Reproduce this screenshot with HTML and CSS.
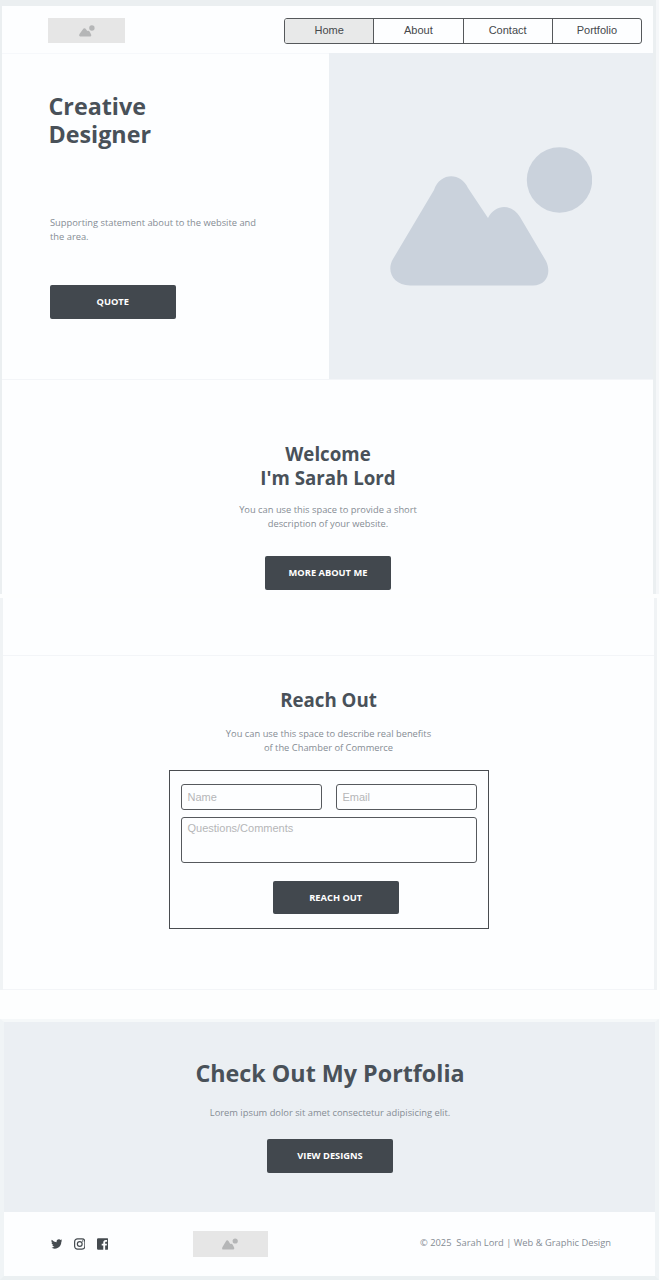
FILE: index.html
```html
<!DOCTYPE html>
<html lang="en">
<head>
<meta charset="utf-8">
<title>Sarah Lord | Web &amp; Graphic Design</title>
<link rel="stylesheet" href="styles.css">
</head>
<body>
<svg class="defs" width="0" height="0" aria-hidden="true">
  <symbol id="picture" viewBox="0 0 202 139">
    <path d="M44 43C50 25 71 25 78 41L98 71C106 56 122 57 130 70L156 114C162 127 156 138.500 143 138.500H20C3 138-4 124 3 112Z"/>
    <circle cx="169.500" cy="33" r="32.700"/>
  </symbol>
</svg>
<div class="sheet sheet-top">
  <header class="header">
    <div class="logo"><svg class="logo-icon" viewBox="0 0 16 12"><path d="M1.300 11.500C0 11.500-.2 10 .7 8.800L3.800 4.500C4.600 3 6.200 3 7 4.200L8.300 6C9.200 5.300 10.200 5.700 10.700 6.700L12 9.200C12.700 10.500 12 11.500 10.800 11.500Z"/><circle cx="12.900" cy="3" r="2.700"/></svg></div>
    <nav class="nav">
      <a class="nav-item active">Home</a><a class="nav-item">About</a><a class="nav-item">Contact</a><a class="nav-item">Portfolio</a>
    </nav>
  </header>
  <section class="hero">
    <div class="hero-copy">
      <h1 class="title">Creative<br>Designer</h1>
      <p class="text hero-text">Supporting statement about to the website and<br>the area.</p>
      <a class="button">QUOTE</a>
    </div>
    <div class="hero-image"><svg class="hero-picture"><use href="#picture"/></svg></div>
  </section>
  <section class="welcome">
    <h2 class="subtitle">Welcome<br>I'm Sarah Lord</h2>
    <p class="text welcome-text">You can use this space to provide a short<br>description of your website.</p>
    <a class="button">MORE ABOUT ME</a>
  </section>
</div>
<div class="sheet sheet-middle">
  <div class="spacer"></div>
  <section class="contact">
    <h2 class="subtitle">Reach Out</h2>
    <p class="text contact-text">You can use this space to describe real benefits<br>of the Chamber of Commerce</p>
    <form class="form">
      <div class="row">
        <div class="field">Name</div>
        <div class="field">Email</div>
      </div>
      <div class="field area">Questions/Comments</div>
      <a class="button form-button">REACH OUT</a>
    </form>
  </section>
</div>
<div class="sheet sheet-bottom">
  <section class="portfolio">
    <h2 class="title portfolio-title">Check Out My Portfolia</h2>
    <p class="text portfolio-text">Lorem ipsum dolor sit amet consectetur adipisicing elit.</p>
    <a class="button">VIEW DESIGNS</a>
  </section>
  <footer class="footer">
    <div class="social">
      <svg class="social-icon" viewBox="0 0 24 20"><path d="M24 2.400a10 10 0 0 1-2.800.8A5 5 0 0 0 23.300.5a10 10 0 0 1-3.100 1.200 4.900 4.900 0 0 0-8.400 4.500A14 14 0 0 1 1.700 1a4.900 4.900 0 0 0 1.500 6.600A5 5 0 0 1 1 7v.1a4.900 4.900 0 0 0 3.900 4.800 5 5 0 0 1-2.200.1 4.900 4.900 0 0 0 4.600 3.400A9.900 9.900 0 0 1 0 17.500a14 14 0 0 0 21.500-12.400A10 10 0 0 0 24 2.400Z"/></svg>
      <svg class="social-icon" viewBox="0 0 24 24"><g class="outline"><rect x="1.300" y="1.300" width="21.400" height="21.400" rx="6"/><circle cx="12" cy="12" r="5"/></g><circle cx="18.200" cy="5.800" r="1.500"/></svg>
      <svg class="social-icon" viewBox="0 0 24 24"><path d="M2.500 0h19A2.500 2.500 0 0 1 24 2.500v19a2.500 2.500 0 0 1-2.500 2.500H17v-9h3.300l.5-3.700H17V9c0-1.200.5-1.900 2-1.900h2V3.700C20 3.500 19 3.500 18 3.500c-3 0-4.900 1.900-4.900 5v2.800H9.800V15h3.300v9H2.500A2.500 2.500 0 0 1 0 21.500v-19A2.500 2.500 0 0 1 2.500 0Z"/></svg>
    </div>
    <div class="logo footer-logo"><svg class="logo-icon" viewBox="0 0 16 12"><path d="M1 11.500C0 11.500-.2 10 .7 8.800L3.800 3.500C4.600 2 5.800 2 6.600 3.200L8.300 6C9.200 5.300 10.200 5.700 10.700 6.700L12 9.200C12.700 10.500 12 11.500 10.800 11.500Z"/><circle cx="13.200" cy="3" r="2.600"/></svg></div>
    <p class="text copyright">© 2025 &nbsp;Sarah Lord | Web &amp; Graphic Design</p>
  </footer>
</div>
</body>
</html>
```
FILE: styles.css
```css
* { box-sizing: border-box; }
body {
  margin: 0;
  width: 660px;
  height: 1280px;
  overflow: hidden;
  background: #fdfefe;
  color: #495159;
  font-family: "Open Sans", sans-serif;
}
h1, h2, p { margin: 0; }
.defs { display: block; }
.sheet { background: #fdfeff; border: solid #ebeff1; border-width: 0; }
.sheet-top { width: 656px; height: 594px; border-width: 6px 3px 0 2px; box-shadow: 3px 0 #f5f7f9; }
.sheet-middle { width: 657px; height: 392px; margin-top: 4px; border-width: 0 3px; border-color: #f0f3f5; }
.sheet-bottom {
  width: 659px;
  height: 261px;
  margin-top: 29px;
  border-width: 3px 4px 4px;
  border-color: #f5f8f9 #f0f4f6 #ebf0f2;
}

.header {
  display: flex;
  justify-content: space-between;
  height: 47px;
  padding: 12px 11px 0 46px;
}
.logo {
  display: flex;
  align-items: center;
  justify-content: center;
  width: 77px;
  height: 25px;
  background: #e6e6e6;
}
.logo-icon { width: 16px; height: 12px; fill: #b5b6b7; }
.nav {
  display: flex;
  width: 358px;
  height: 26px;
  border: 1px solid #55585b;
  border-radius: 3px;
  overflow: hidden;
  font: 11px/23px "Liberation Sans", Arial, sans-serif;
  color: #45484b;
}
.nav-item { flex: 1; text-align: center; }
.nav-item + .nav-item { border-left: 1px solid #55585b; }
.active { background: #e8e9e9; }

.hero { display: flex; height: 326px; }
.hero-copy { width: 327px; padding: 38px 0 0 46.500px; border-top: 1px solid #f6f8fb; }
.title { font-size: 23.300px; line-height: 28px; font-weight: 700; }
.text { font-size: 9.340px; line-height: 14px; color: #858c94; white-space: nowrap; }
.hero-text { margin: 68px 0 41px 1.500px; }
.button {
  display: block;
  width: 126.500px;
  height: 33.500px;
  background: #42484e;
  border-radius: 2px;
  color: #fff;
  font-size: 9.300px;
  line-height: 33px;
  font-weight: 700;
  text-align: center;
}
.hero-copy .button { margin-left: 1px; }
.hero-image { flex: 1; padding: 94px 0 0 61px; background: #ebeff3; }
.hero-picture { display: block; width: 202px; height: 139px; fill: #cad2dc; }

.welcome {
  display: flex;
  flex-direction: column;
  align-items: center;
  height: 215px;
  padding: 62px 0 0 1px;
  border-top: 1px solid #f3f5f8;
}
.subtitle { font-size: 18.700px; line-height: 24px; font-weight: 700; text-align: center; }
.welcome .text, .contact-text, .portfolio-text { text-align: center; }
.welcome-text { margin: 13px 0 25px; }

.spacer { height: 57px; }
.contact {
  display: flex;
  flex-direction: column;
  align-items: center;
  height: 335px;
  padding-top: 32px;
  border: solid #f3f5f8;
  border-width: 1px 0;
}
.contact-text { margin: 15px 0 15px; }
.form {
  width: 320px;
  height: 159px;
  padding: 13px 11px;
  border: 1px solid #494c50;
}
.row { display: flex; justify-content: space-between; margin-bottom: 7px; }
.field {
  width: 141px;
  height: 26px;
  padding-left: 6px;
  border: 1px solid #56595d;
  border-radius: 3px;
  color: #b5b6b8;
  font: 11px/24px "Liberation Sans", Arial, sans-serif;
}
.area { width: 296px; height: 46px; line-height: 21px; }
.form-button { margin: 17.500px 0 0 92px; }

.portfolio {
  display: flex;
  flex-direction: column;
  align-items: center;
  height: 190px;
  padding: 37px 0 0 1px;
  background: #ebeff3;
}
.portfolio-text { margin: 19px 0 19px; }
.footer { display: flex; height: 64px; padding: 19px 44px 0 46.500px; }
.social { display: flex; gap: 11.500px; padding-top: 7px; }
.social-icon { width: 11.500px; height: 12px; fill: #454b50; }
.outline { fill: none; stroke: #454b50; stroke-width: 2.500; }
.footer-logo { width: 75px; height: 26px; margin-left: 84.500px; }
.copyright { margin-left: auto; padding-top: 5px; }
```
